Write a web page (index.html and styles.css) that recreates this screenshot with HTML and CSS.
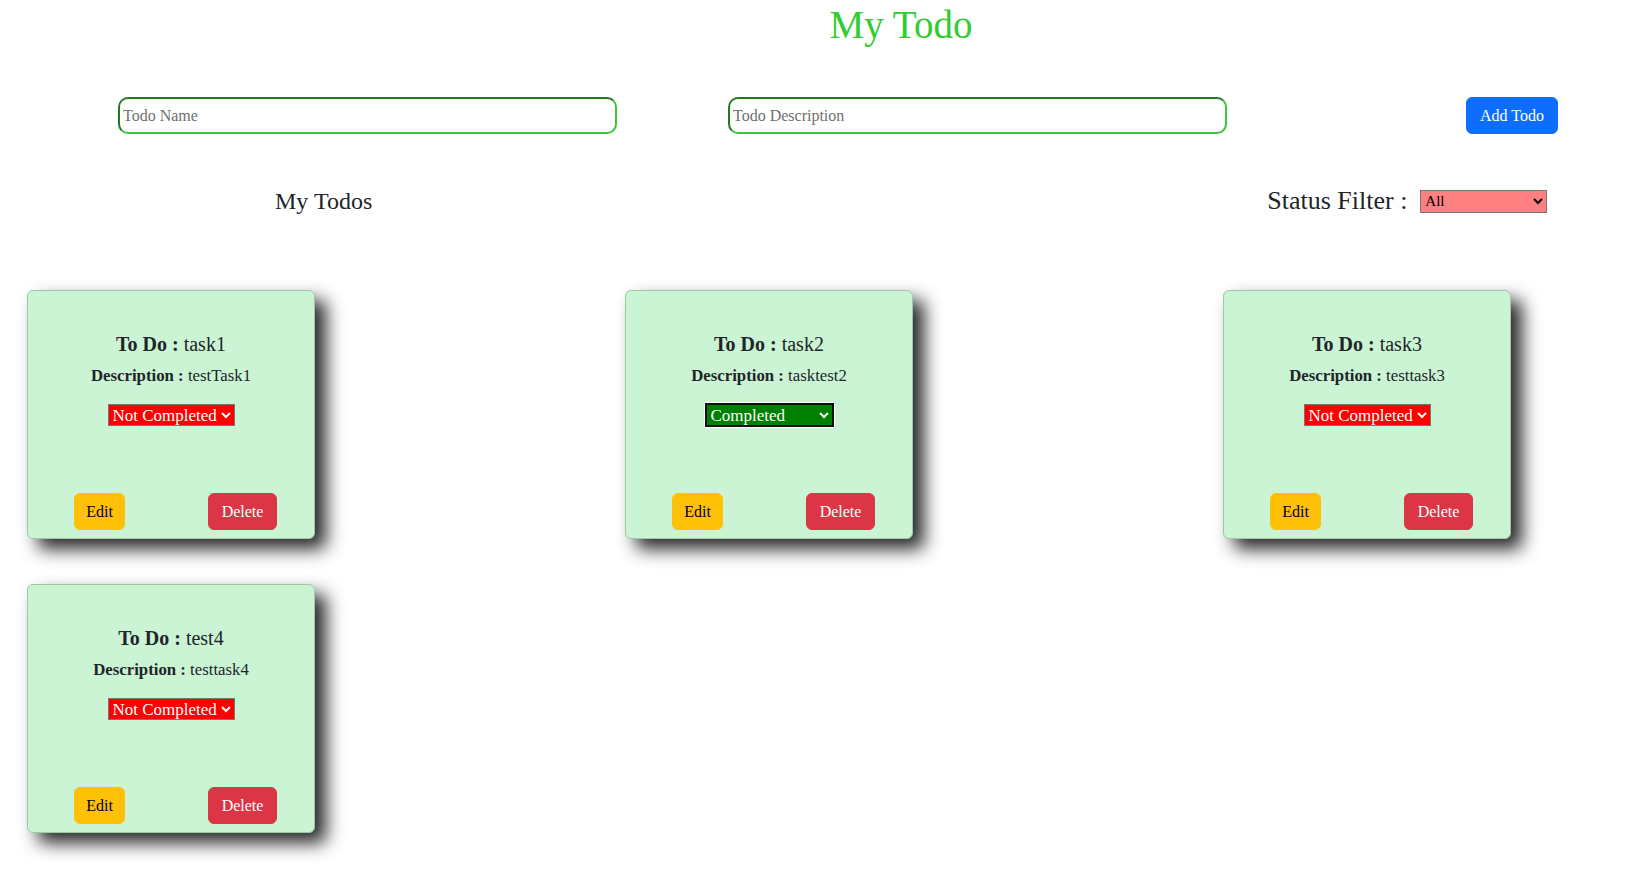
FILE: index.html
```html
<!DOCTYPE html>
<html lang="en">
<head>
<meta charset="utf-8">
<title>My Todo</title>
<link rel="stylesheet" href="styles.css">
</head>
<body>
<div class="page">
  <h1 class="title">My Todo</h1>

  <form class="add-form">
    <input class="field field-name" type="text" placeholder="Todo Name">
    <input class="field field-desc" type="text" placeholder="Todo Description">
    <button type="button" class="btn btn-primary add-btn">Add Todo</button>
  </form>

  <div class="list-head">
    <h4 class="list-title">My Todos</h4>
    <div class="filter">
      <span class="filter-label">Status Filter :</span>
      <select class="filter-select">
        <option>All</option>
        <option>Completed</option>
        <option>Not Completed</option>
      </select>
    </div>
  </div>

  <div class="cards">
    <div class="card">
      <h5 class="card-title"><b>To Do :</b> task1</h5>
      <p class="card-desc"><b>Description :</b> testTask1</p>
      <select class="status status-no">
        <option selected>Not Completed</option>
        <option>Completed</option>
      </select>
      <div class="card-actions">
        <div class="action"><button type="button" class="btn btn-warning">Edit</button></div>
        <div class="action"><button type="button" class="btn btn-danger">Delete</button></div>
      </div>
    </div>

    <div class="card">
      <h5 class="card-title"><b>To Do :</b> task2</h5>
      <p class="card-desc"><b>Description :</b> tasktest2</p>
      <select class="status status-yes">
        <option selected>Completed</option>
        <option>Not Completed</option>
      </select>
      <div class="card-actions">
        <div class="action"><button type="button" class="btn btn-warning">Edit</button></div>
        <div class="action"><button type="button" class="btn btn-danger">Delete</button></div>
      </div>
    </div>

    <div class="card">
      <h5 class="card-title"><b>To Do :</b> task3</h5>
      <p class="card-desc"><b>Description :</b> testtask3</p>
      <select class="status status-no">
        <option selected>Not Completed</option>
        <option>Completed</option>
      </select>
      <div class="card-actions">
        <div class="action"><button type="button" class="btn btn-warning">Edit</button></div>
        <div class="action"><button type="button" class="btn btn-danger">Delete</button></div>
      </div>
    </div>

    <div class="card">
      <h5 class="card-title"><b>To Do :</b> test4</h5>
      <p class="card-desc"><b>Description :</b> testtask4</p>
      <select class="status status-no">
        <option selected>Not Completed</option>
        <option>Completed</option>
      </select>
      <div class="card-actions">
        <div class="action"><button type="button" class="btn btn-warning">Edit</button></div>
        <div class="action"><button type="button" class="btn btn-danger">Delete</button></div>
      </div>
    </div>
  </div>
</div>
</body>
</html>
```

FILE: styles.css
```css
body {
  margin: 0;
  background: #ffffff;
  color: #212529;
  font-family: "Liberation Serif", "DejaVu Serif", serif;
}

.page {
  padding-bottom: 30px;
}

.title {
  margin: 0 0 0 155px;
  padding-top: 2px;
  text-align: center;
  font-size: 39px;
  font-weight: 400;
  line-height: 46px;
  color: #32cd32;
}

.add-form {
  display: flex;
  align-items: center;
  margin: 49px 0 0;
  padding-left: 118px;
}

.field {
  box-sizing: border-box;
  width: 499px;
  height: 37px;
  padding: 0 3px;
  border: 2px solid;
  border-color: #217a21 #3cc43c #3cc43c #217a21;
  border-radius: 10px;
  font-family: inherit;
  font-size: 16px;
  color: #212529;
  background: #fff;
  outline: none;
}

.field::placeholder {
  color: #6f6f6f;
}

.field-desc {
  margin-left: 111px;
}

.add-btn {
  margin-left: 239px;
}

.btn {
  box-sizing: border-box;
  height: 37px;
  padding: 6px 12px;
  border: 1px solid transparent;
  border-radius: 6px;
  font-family: inherit;
  font-size: 16px;
  line-height: 23px;
  cursor: pointer;
}

.btn-primary {
  background: #0d6efd;
  border-color: #0d6efd;
  color: #fff;
  padding: 6px 13px;
}

.btn-warning {
  background: #ffc107;
  border-color: #ffc107;
  color: #000;
  padding: 6px 11px;
}

.btn-danger {
  background: #dc3545;
  border-color: #dc3545;
  color: #fff;
  padding: 6px 13px;
}

.list-head {
  display: flex;
  align-items: center;
  height: 30px;
  margin-top: 52px;
}

.list-title {
  margin: 0 0 0 275px;
  font-size: 24px;
  font-weight: 400;
  line-height: 30px;
}

.filter {
  display: flex;
  align-items: center;
  margin-left: 895px;
}

.filter-label {
  font-size: 26px;
  line-height: 30px;
}

.filter-select {
  margin-left: 13px;
  width: 127px;
  height: 23px;
  border: 1px solid #767676;
  border-radius: 0;
  background-color: #ff8080;
  color: #000;
  font-family: inherit;
  font-size: 15px;
}

.cards {
  display: grid;
  grid-template-columns: repeat(3, 598px);
  row-gap: 45px;
  margin-top: 74px;
  padding-left: 27px;
}

.card {
  box-sizing: border-box;
  width: 288px;
  height: 249px;
  display: flex;
  flex-direction: column;
  align-items: center;
  padding: 40px 0 8px;
  background: #cbf4d4;
  border: 1px solid #9dc9a7;
  border-radius: 6px;
  box-shadow: 11px 10px 18px rgba(0, 0, 0, 0.85);
}

.card-title {
  margin: 0;
  font-size: 20px;
  font-weight: 400;
  line-height: 26px;
}

.card-desc {
  margin: 8px 0 0;
  font-size: 16.8px;
  line-height: 22px;
}

.status {
  margin-top: 17px;
  height: 22px;
  border: 1px solid #767676;
  border-radius: 0;
  font-family: inherit;
  font-size: 17px;
  color: #fff;
}

.status-no {
  background-color: #ff0000;
}

.status-yes {
  background-color: #008000;
  outline: 2px solid #101010;
  outline-offset: -1px;
  box-shadow: 0 0 0 2px #ffffff;
}

.card-actions {
  display: flex;
  width: 100%;
  margin-top: auto;
}

.action {
  flex: 1;
  display: flex;
  justify-content: center;
}
```
